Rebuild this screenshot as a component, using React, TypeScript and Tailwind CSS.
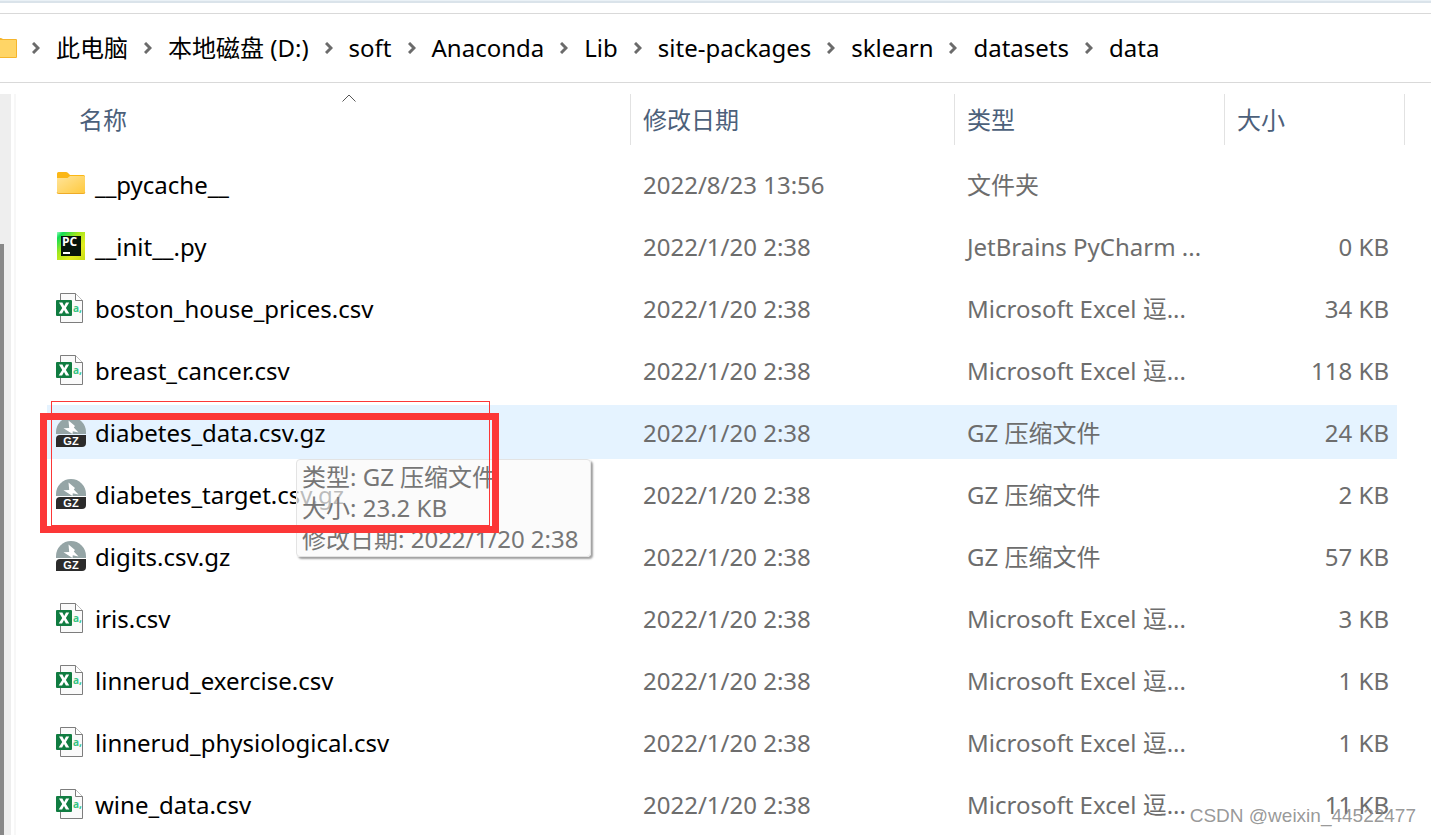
import { Fragment, type ReactNode } from "react";
import clsx from "clsx";

type Kind = "folder" | "py" | "csv" | "gz";

interface FileItem {
  name: string;
  kind: Kind;
  date: string;
  type: string;
  size?: string;
}

const EXCEL = "Microsoft Excel 逗...";
const GZ = "GZ 压缩文件";
const DATE = "2022/1/20 2:38";

const crumbs = ["此电脑", "本地磁盘 (D:)", "soft", "Anaconda", "Lib", "site-packages", "sklearn", "datasets", "data"];

const files: FileItem[] = [
  { name: "__pycache__", kind: "folder", date: "2022/8/23 13:56", type: "文件夹" },
  { name: "__init__.py", kind: "py", date: DATE, type: "JetBrains PyCharm ...", size: "0 KB" },
  { name: "boston_house_prices.csv", kind: "csv", date: DATE, type: EXCEL, size: "34 KB" },
  { name: "breast_cancer.csv", kind: "csv", date: DATE, type: EXCEL, size: "118 KB" },
  { name: "diabetes_data.csv.gz", kind: "gz", date: DATE, type: GZ, size: "24 KB" },
  { name: "diabetes_target.csv.gz", kind: "gz", date: DATE, type: GZ, size: "2 KB" },
  { name: "digits.csv.gz", kind: "gz", date: DATE, type: GZ, size: "57 KB" },
  { name: "iris.csv", kind: "csv", date: DATE, type: EXCEL, size: "3 KB" },
  { name: "linnerud_exercise.csv", kind: "csv", date: DATE, type: EXCEL, size: "1 KB" },
  { name: "linnerud_physiological.csv", kind: "csv", date: DATE, type: EXCEL, size: "1 KB" },
  { name: "wine_data.csv", kind: "csv", date: DATE, type: EXCEL, size: "11 KB" },
];

const HOVERED = "diabetes_data.csv.gz";

function FolderIcon() {
  return (
    <svg viewBox="0 0 30 30" className="size-[30px] shrink-0" aria-hidden="true">
      <defs>
        <linearGradient id="folder" x1="0" y1="0" x2="1" y2="1">
          <stop offset="0" stopColor="#ffe49a" />
          <stop offset="1" stopColor="#ffc93c" />
        </linearGradient>
      </defs>
      <path d="M1 4.5Q1 3 2.500 3H10q1 0 1.800.8L14 6h13.500Q29 6 29 7.500V12H1z" fill="#fbb716" />
      <path d="M1 9h10.500l2.500-2h13.700Q29 7 29 8.300v15.200q0 1.500-1.500 1.500h-25Q1 25 1 23.500z" fill="url(#folder)" />
      <path d="M1.200 23.500q.2 1 1.300 1h25q1.200 0 1.300-1" fill="none" stroke="#efab27" />
    </svg>
  );
}

function PyCharmIcon() {
  return (
    <svg viewBox="0 0 30 30" className="size-[30px] shrink-0" aria-hidden="true">
      <defs>
        <linearGradient id="pycharm" x1="0" y1="0" x2="1" y2="1">
          <stop offset="0" stopColor="#9bffc0" />
          <stop offset="0.12" stopColor="#12dd55" />
          <stop offset="0.4" stopColor="#a5e81c" />
          <stop offset="0.7" stopColor="#e3ec20" />
          <stop offset="1" stopColor="#c8dc14" />
        </linearGradient>
      </defs>
      <path d="M1 1h28v28H1z" fill="url(#pycharm)" />
      <path d="M5 5h20v20H5z" fill="#06140a" />
      <text x="6" y="15" fill="#fff" fontSize="12" fontWeight="700" fontFamily="Open Sans, sans-serif">
        PC
      </text>
      <path d="M7 21h7v2H7z" fill="#fff" />
    </svg>
  );
}

function CsvIcon() {
  return (
    <svg viewBox="0 0 30 30" className="size-[30px] shrink-0" aria-hidden="true">
      <path d="M4.500.5h15l7 7v22h-22z" fill="#fafafa" stroke="#7d7d7d" />
      <path d="M19.500.5v7h7" fill="#fff" stroke="#7d7d7d" />
      <rect y="7" width="16" height="16" rx="1" fill="#107c41" />
      <path d="M3 9.500h3.400L8.200 13 10 9.500h3.200L9.900 15l3.400 5.500H9.900L8 17 6.100 20.500H2.700L6.200 15z" fill="#fff" />
      <text x="17" y="19" fill="#33c481" fontSize="10" fontWeight="700" fontFamily="Open Sans, sans-serif">
        a,
      </text>
    </svg>
  );
}

function GzIcon() {
  return (
    <svg viewBox="0 0 30 30" className="size-[30px] shrink-0" aria-hidden="true">
      <path d="M0 17V15a15 15 0 0 1 30 0v2z" fill="#95a5a6" />
      <path d="M0 22q0-4 4-4h26v8q0 4-4 4H0z" fill="#2b2b2b" />
      <path d="M12.500 3.500 19 9 17.800 10.500 22.500 15.500 16.800 14.200 16.500 17 7.500 11.300 13.200 11z" fill="#fff" />
      <text x="15" y="28" textAnchor="middle" fill="#fff" fontSize="11" fontWeight="700" fontFamily="Liberation Sans, sans-serif">
        GZ
      </text>
    </svg>
  );
}

const icons: Record<Kind, ReactNode> = {
  folder: <FolderIcon />,
  py: <PyCharmIcon />,
  csv: <CsvIcon />,
  gz: <GzIcon />,
};

function Chevron() {
  return (
    <svg viewBox="0 0 8 12" className="mx-4 h-3 w-2 shrink-0" aria-hidden="true">
      <path d="M1 1 6 6 1 11" fill="none" stroke="#6b6b6b" strokeWidth="3" />
    </svg>
  );
}

function AddressBar() {
  return (
    <nav aria-label="路径" className="flex h-[70px] items-center border-y border-[#d9d9d9] whitespace-nowrap">
      <svg viewBox="0 0 17 20" className="-mr-px h-5 w-[17px] shrink-0" aria-hidden="true">
        <path d="M0 0h1l2 1h13q1 0 1 1v17q0 1-1 1H0z" fill="#f5b52c" />
        <path d="M0 2h16v17H0z" fill="#ffd566" />
      </svg>
      {crumbs.map((crumb) => (
        <Fragment key={crumb}>
          <Chevron />
          <a href="#" className="text-black">
            {crumb}
          </a>
        </Fragment>
      ))}
    </nav>
  );
}

function HeaderCell({ label, sorted }: { label: string; sorted?: boolean }) {
  return (
    <th scope="col" className="h-[55px] p-0 align-top font-normal">
      <button
        type="button"
        className={clsx(
          "relative block h-[51px] w-full text-left text-[#4c607a]",
          sorted ? "pl-8" : "border-l border-[#e2e2e2] pl-3"
        )}
      >
        {sorted && (
          <svg viewBox="0 0 14 8" className="absolute top-0 left-1/2 ml-[3px] h-2 w-3.5" aria-hidden="true">
            <path d="M.5 7.500 7 1l6.500 6.500" fill="none" stroke="#555" />
          </svg>
        )}
        {label}
      </button>
    </th>
  );
}

function FileRow({ file, active }: { file: FileItem; active: boolean }) {
  return (
    <tr className={clsx("h-[54px] text-[#6d6d6d]", active && "[&>td:not(:last-child)]:bg-[#e5f3ff]")}>
      <td className="p-0 pl-[9px]">
        <div className="flex items-center gap-[9px]">
          {icons[file.kind]}
          <span className="pt-0.5 text-black">{file.name}</span>
        </div>
      </td>
      <td className="p-0 pt-0.5 pl-[13px]">{file.date}</td>
      <td className="p-0 pt-0.5 pl-[13px]">{file.type}</td>
      <td className="p-0 pt-0.5 pr-2 text-right">{file.size}</td>
      <td className="p-0" />
    </tr>
  );
}

function Tooltip() {
  return (
    <div
      role="tooltip"
      className="absolute top-[365px] left-[280px] rounded border border-[#e3e3e3] bg-[#f9f9f9]/75 pt-px pr-3 pb-[2px] pl-[5px] leading-[31px] text-[#767676] shadow-[2px_2px_2px_#a0a0a0]"
    >
      <p>类型: GZ 压缩文件</p>
      <p>大小: 23.2 KB</p>
      <p>修改日期: {DATE}</p>
    </div>
  );
}

export default function App() {
  return (
    <div className="relative flex h-screen flex-col overflow-hidden bg-white font-['Noto_Sans','Noto_Sans_CJK_SC',sans-serif] text-[24px] leading-8">
      <div className="mb-[10px] h-[3px] shrink-0 border-t border-[#eaf1f6] bg-[#dae3ea]" />
      <AddressBar />
      <main className="mt-[11px] flex min-h-0 flex-1">
        <div className="w-[11px] shrink-0 bg-[#eeeeee] pt-[150px]">
          <div className="h-full w-1 bg-[#888888]" />
        </div>
        <div className="ml-[3px] w-[2px] shrink-0 bg-[#f7f7f7]" />
        <div className="relative min-w-0 flex-1 pr-[26px] pl-[31px]">
          <table className="-mt-2 w-full table-fixed border-separate border-spacing-x-0 border-spacing-y-2 whitespace-nowrap">
            <colgroup>
              <col />
              <col className="w-[324px]" />
              <col className="w-[270px]" />
              <col className="w-[173px]" />
              <col className="w-2" />
            </colgroup>
            <thead>
              <tr>
                <HeaderCell label="名称" sorted />
                <HeaderCell label="修改日期" />
                <HeaderCell label="类型" />
                <HeaderCell label="大小" />
                <td className="p-0 align-top">
                  <div className="h-[51px] border-r border-[#e2e2e2]" />
                </td>
              </tr>
            </thead>
            <tbody>
              {files.map((file) => (
                <FileRow key={file.name} file={file} active={file.name === HOVERED} />
              ))}
            </tbody>
          </table>
          <Tooltip />
          {/* marked files */}
          <div className="pointer-events-none absolute top-[307px] left-[35px] h-[125px] w-[439px] border border-[#fc3737]" />
          <div className="pointer-events-none absolute top-[319px] left-6 h-[120px] w-[459px] border-[7px] border-[#fc3737]" />
        </div>
      </main>
      <p className="absolute right-[15px] bottom-[7px] font-['Liberation_Sans',sans-serif] text-[19px] leading-6 text-[#8c8c8c]/90">
        CSDN @weixin_44522477
      </p>
    </div>
  );
}
